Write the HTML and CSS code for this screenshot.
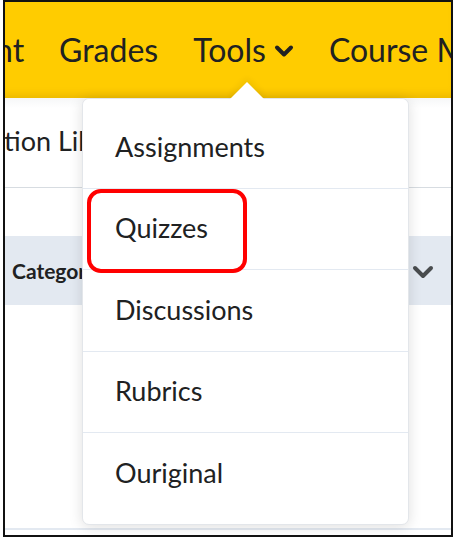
FILE: index.html
```html
<!DOCTYPE html>
<html>
<head>
<meta charset="utf-8">
<link rel="stylesheet" href="styles.css">
</head>
<body>
<div class="frame">
  <nav class="navbar">
    <div class="nav-track">
      <span class="nav-item">nt</span>
      <span class="nav-item">Grades</span>
      <span class="nav-item nav-tools">Tools
        <svg class="nav-chev" width="20" height="14" viewBox="0 0 20 14"><path d="M3 3.5 L10 10.5 L17 3.5" fill="none" stroke="#202122" stroke-width="4" stroke-linecap="round" stroke-linejoin="round"/></svg>
      </span>
      <span class="nav-item">Course M</span>
    </div>
  </nav>
  <main class="content">
    <div class="row-title"><span class="title-text">tion Library</span></div>
    <div class="row-blank"></div>
    <div class="row-head">
      <span class="head-text">Category</span>
      <svg class="head-chev" width="22" height="14" viewBox="0 0 22 14"><path d="M3 3 L11 11 L19 3" fill="none" stroke="#494c4e" stroke-width="4" stroke-linecap="round" stroke-linejoin="round"/></svg>
    </div>
    <div class="row-rest"></div>
    <div class="row-line"></div>
  </main>
  <div class="menu">
    <div class="menu-pointer"></div>
    <ul class="menu-list">
      <li class="menu-item">Assignments</li>
      <li class="menu-item">Quizzes</li>
      <li class="menu-item">Discussions</li>
      <li class="menu-item">Rubrics</li>
      <li class="menu-item">Ouriginal</li>
    </ul>
    <div class="highlight"></div>
  </div>
</div>
</body>
</html>
```
FILE: styles.css
```css
* { box-sizing: border-box; }
html, body { margin: 0; padding: 0; background: #ffffff; }
body { font-family: Lato, "Open Sans", sans-serif; color: #202122; }

.frame {
  position: relative;
  margin-left: 3px;
  width: 450px;
  height: 537px;
  border: 2px solid #111;
  overflow: hidden;
  display: flex;
  flex-direction: column;
}

.navbar {
  height: 96px;
  flex: none;
  background: #ffcc00;
  box-shadow: inset 0 -8px 8px -6px rgba(160, 110, 0, 0.25);
  overflow: hidden;
}
.nav-track {
  display: flex;
  align-items: center;
  height: 100%;
  gap: 35px;
  margin-left: -10px;
  padding-bottom: 2px;
  white-space: nowrap;
  font-size: 32px;
  color: #202122;
}
.nav-item { display: flex; align-items: center; flex-shrink: 0; }
.nav-tools { gap: 8px; }
.nav-chev { margin-top: 4px; }

.content { flex: 1; display: flex; flex-direction: column; background: #fff; }
.row-title {
  height: 90px;
  display: flex;
  align-items: center;
  border-bottom: 1px solid #d7dce1;
  background: linear-gradient(#f6f7f8, #ffffff 10px);
  overflow: hidden;
  white-space: nowrap;
}
.title-text { font-size: 27px; margin-left: -1px; padding-bottom: 4px; }
.row-blank { height: 48px; }
.row-head {
  height: 69px;
  background: #e3e9f1;
  display: flex;
  align-items: center;
  justify-content: space-between;
  padding: 0 17px 0 7px;
}
.head-text { font-size: 21px; font-weight: 700; }
.head-chev { margin-top: 2px; }
.row-rest { flex: 1; }
.row-line { height: 2px; background: #e3e9f1; margin-bottom: 5px; }

.menu {
  position: absolute;
  left: 77px;
  top: 96px;
  width: 327px;
  height: 427px;
  background: #fff;
  border: 1px solid #e3e6ea;
  border-radius: 7px;
  box-shadow: 0 2px 14px rgba(0, 0, 0, 0.13);
}
.menu-pointer {
  position: absolute;
  left: 152px;
  top: -12px;
  width: 24px;
  height: 24px;
  background: #fff;
  transform: rotate(45deg);
  box-shadow: -3px -3px 6px rgba(0, 0, 0, 0.06);
}
.menu-list {
  position: relative;
  list-style: none;
  margin: 0;
  padding: 8px 0;
  background: #fff;
  border-radius: 7px;
}
.menu-item {
  height: 81.5px;
  display: flex;
  align-items: center;
  padding: 0 0 2px 32px;
  font-size: 27px;
  color: #202122;
  border-bottom: 1px solid #e3e9f1;
}
.menu-item:last-child { border-bottom: none; }

.highlight {
  position: absolute;
  left: 4px;
  top: 90px;
  width: 160px;
  height: 84px;
  border: 4px solid #ff0000;
  border-radius: 14px;
}
```
